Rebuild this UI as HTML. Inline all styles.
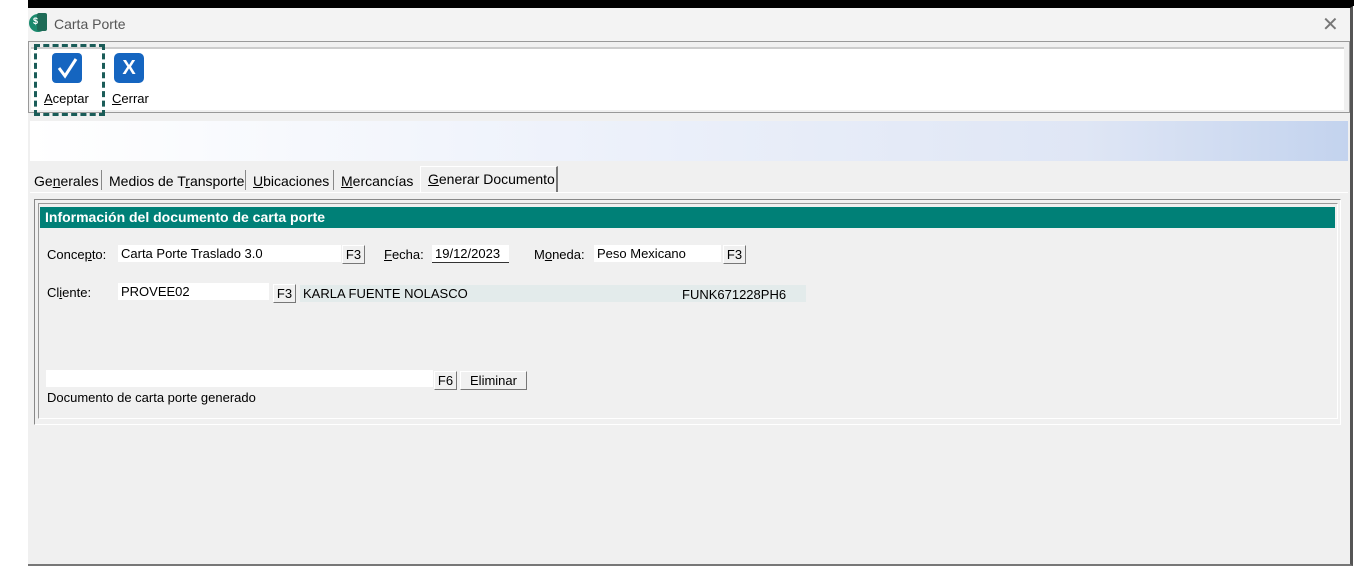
<!DOCTYPE html>
<html><head><style>
body{margin:0;width:1362px;height:573px;background:#fff;position:relative;overflow:hidden;font-family:"Liberation Sans",sans-serif;font-size:13px;color:#000}
.a{position:absolute}
.win{left:28px;top:6px;width:1322px;height:556px;background:#f0f0f0;border-right:3px solid #555;border-bottom:2px solid #777;border-top:2px solid #000}
.inp{background:#fff;height:17px;line-height:17px;padding-left:3px}
.btn{background:#f0f0f0;border:1px solid;border-color:#fff #777 #777 #fff;height:17px;line-height:18px;text-align:center;font-size:13px}
.tab{top:173px;font-size:14px}
</style></head><body>
<div class="a" style="left:28px;top:0;width:1326px;height:6px;background:#000"></div>
<div class="a win"></div>
<div class="a" style="left:28px;top:8px;width:1322px;height:33px;background:#f3f3f3"></div>
<div class="a" style="left:29px;top:14px;width:18px;height:18px;border-radius:50%;background:#1b8a6e"></div>
<div class="a" style="left:37px;top:13px;width:10px;height:18px;background:#1e6b57;border-radius:2px"></div>
<div class="a" style="left:33px;top:16px;color:#fff;font-size:9px;font-weight:bold">$</div>
<div class="a" style="left:54px;top:16px;font-size:14px;color:#555">Carta Porte</div>
<div class="a" style="left:1322px;top:12px;font-size:20px;color:#777">✕</div>
<div class="a" style="left:28px;top:41px;width:1320px;height:70px;border:1px solid #999;background:#f0f0f0"></div>
<div class="a" style="left:31px;top:47px;width:1313px;height:61px;background:#fff;border-top:2px solid #ccc"></div>
<div class="a" style="left:34px;top:44px;width:65px;height:66px;border:3px dashed #1a5c58"></div>
<div class="a" style="left:52px;top:53px;width:30px;height:30px;background:#1565c0;border-radius:4px"></div>
<svg class="a" style="left:52px;top:53px" width="30" height="30"><path d="M7 15 L13 23 L24 6" stroke="#fff" stroke-width="3" fill="none"/></svg>
<div class="a" style="left:114px;top:53px;width:30px;height:30px;background:#1565c0;border-radius:5px;color:#fff;font-weight:bold;font-size:20px;text-align:center;line-height:30px">X</div>
<div class="a" style="left:44px;top:91px;font-size:13px"><u>A</u>ceptar</div>
<div class="a" style="left:112px;top:91px;font-size:13px"><u>C</u>errar</div>
<div class="a" style="left:30px;top:121px;width:1318px;height:40px;background:linear-gradient(90deg,#fff,#eef2fb 40%,#dfe6f5 80%,#c3d3ee)"></div>
<div class="a tab" style="left:34px">Ge<u>n</u>erales</div>
<div class="a" style="left:101px;top:170px;height:20px;border-left:1px solid #888"></div>
<div class="a tab" style="left:109px">Medios de T<u>r</u>ansporte</div>
<div class="a" style="left:245px;top:170px;height:20px;border-left:1px solid #888"></div>
<div class="a tab" style="left:253px"><u>U</u>bicaciones</div>
<div class="a" style="left:333px;top:170px;height:20px;border-left:1px solid #888"></div>
<div class="a tab" style="left:341px"><u>M</u>ercancías</div>
<div class="a" style="left:420px;top:166px;width:135px;height:25px;border-top:1px solid #fff;border-left:1px solid #fff;border-right:2px solid #777;background:#f0f0f0"></div>
<div class="a tab" style="left:428px;top:171px"><u>G</u>enerar Documento</div>
<div class="a" style="left:30px;top:192px;width:1318px;height:1px;background:#fff"></div>
<div class="a" style="left:34px;top:199px;width:1305px;height:224px;border:1px solid #888;border-right-color:#fff;border-bottom-color:#fff"></div>
<div class="a" style="left:38px;top:203px;width:1298px;height:214px;border:1px solid #fff;border-top-color:#999;border-left-color:#999"></div>
<div class="a" style="left:40px;top:207px;width:1295px;height:21px;background:#008077;color:#fff;font-weight:bold;font-size:14px;line-height:21px;padding-left:5px;box-sizing:border-box">Información del documento de carta porte</div>
<div class="a" style="left:47px;top:247px">Conce<u>p</u>to:</div>
<div class="a inp" style="left:118px;top:245px;width:220px">Carta Porte Traslado 3.0</div>
<div class="a btn" style="left:342px;top:245px;width:21px">F3</div>
<div class="a" style="left:384px;top:247px"><u>F</u>echa:</div>
<div class="a inp" style="left:432px;top:245px;width:74px;border-bottom:1px solid #333">19/12/2023</div>
<div class="a" style="left:534px;top:247px">M<u>o</u>neda:</div>
<div class="a inp" style="left:594px;top:245px;width:124px">Peso Mexicano</div>
<div class="a btn" style="left:723px;top:245px;width:21px">F3</div>
<div class="a" style="left:47px;top:285px">Cl<u>i</u>ente:</div>
<div class="a inp" style="left:118px;top:283px;width:148px">PROVEE02</div>
<div class="a btn" style="left:273px;top:284px;width:21px">F3</div>
<div class="a inp" style="left:300px;top:285px;width:503px;background:#e3ebeb">KARLA FUENTE NOLASCO</div>
<div class="a" style="left:682px;top:287px">FUNK671228PH6</div>
<div class="a inp" style="left:46px;top:370px;width:384px"></div>
<div class="a btn" style="left:434px;top:371px;width:21px">F6</div>
<div class="a btn" style="left:460px;top:371px;width:65px">Eliminar</div>
<div class="a" style="left:47px;top:390px">Documento de carta porte generado</div>
</body></html>
